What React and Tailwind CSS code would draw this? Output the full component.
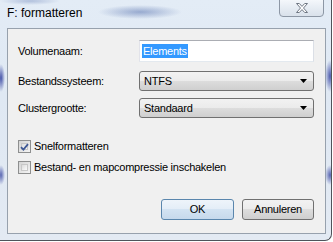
import React from 'react';

const font = "font-['Liberation_Sans',Arial,sans-serif]";

const CloseIcon = () => (
  <svg width="12" height="10" viewBox="0 0 12 10">
    <polygon
      points="0.5,0.5 3.3,0.5 6,3.4 8.7,0.5 11.5,0.5 7.5,5 11.5,9.5 8.7,9.5 6,6.6 3.3,9.5 0.5,9.5 4.5,5"
      fill="#ffffff"
      stroke="#6f7783"
      strokeWidth="1"
      strokeLinejoin="round"
    />
  </svg>
);

const Arrow = () => (
  <svg width="7" height="4" viewBox="0 0 7 4">
    <polygon points="0,0 7,0 3.5,4" fill="#000" />
  </svg>
);

const Combo = ({ value }) => (
  <div className="w-[175px] h-[20px] flex items-center justify-between pl-[4px] pr-[6px] border border-[#707070] rounded-[3px] bg-[linear-gradient(#f2f2f2,#ebebeb_50%,#dddddd_50%,#cfcfcf)]">
    <span className="text-[11px] tracking-[-0.25px] text-black leading-none">{value}</span>
    <Arrow />
  </div>
);

const Checkbox = ({ checked, label }) => (
  <label className="flex items-center gap-[3px] h-[13px]">
    <span className="w-[13px] h-[13px] border border-[#8e8f8f] bg-[linear-gradient(135deg,#d4d4d4,#f4f4f4)] p-[2px] flex">
      <span className="flex-1 bg-[linear-gradient(135deg,#dcdcdc,#fbfbfb)] border border-[#c8c8c8] flex items-center justify-center">
        {checked && (
          <svg width="9" height="8" viewBox="0 0 9 8" className="-m-[2px]">
            <path d="M1 4.2 L3.4 6.6 L8 1.2" fill="none" stroke="#3f5995" strokeWidth="1.8" />
          </svg>
        )}
      </span>
    </span>
    <span className="text-[11px] tracking-[-0.25px] text-black">{label}</span>
  </label>
);

const Row = ({ label, children, className }) => (
  <div className={`flex items-center ${className}`}>
    <span className="w-[121px] text-[11px] tracking-[-0.25px] text-black">{label}</span>
    {children}
  </div>
);

export default function App() {
  return (
    <div className={`w-[333px] h-[242px] bg-white overflow-hidden ${font}`}>
      <div className="w-[332px] h-[241px] flex flex-col pl-[7px] border-r border-b border-[#4f545b] rounded-br-[7px] bg-[radial-gradient(ellipse_42px_7px_at_140px_12px,rgba(60,90,160,0.45),transparent),radial-gradient(ellipse_30px_4px_at_30px_1px,rgba(60,90,160,0.3),transparent),radial-gradient(ellipse_4px_14px_at_1px_78px,rgba(30,45,150,0.8),transparent),radial-gradient(ellipse_4px_10px_at_1px_175px,rgba(30,45,150,0.7),transparent),radial-gradient(ellipse_5px_16px_at_330px_76px,rgba(30,45,150,0.75),transparent),radial-gradient(ellipse_5px_10px_at_330px_175px,rgba(30,45,150,0.7),transparent),linear-gradient(#e3ecf6,#dfe8f3_40%,#e3eaf3)]">
        <div className="h-[28px] flex items-start justify-between pr-[7px]">
          <span className="mt-[6px] text-[12px] leading-[15px] text-black">F: formatteren</span>
          <div className="w-[45px] h-[18px] -mt-[1px] flex items-center justify-center border border-[#8d97a5] rounded-b-[4px] bg-[linear-gradient(#f4f7fb,#e6ecf3_50%,#d9e1eb)]">
            <CloseIcon />
          </div>
        </div>
        <div className="w-[319px] h-[206px] border border-[#97a1ad] bg-[#f0f0f0] flex flex-col pl-[10px] pr-[11px] pt-[11px]">
          <Row label="Volumenaam:">
            <div className="w-[175px] h-[22px] border border-[#abadb3] border-l-[#e2e3ea] border-b-[#e3e9ef] border-r-[#dbdfe6] bg-white flex items-center pl-[2px]">
              <span className="bg-[#3399ff] text-white text-[11px] tracking-[-0.25px] leading-[14px] px-[1px]">Elements</span>
            </div>
          </Row>
          <Row label="Bestandssysteem:" className="mt-[9px]">
            <Combo value="NTFS" />
          </Row>
          <Row label="Clustergrootte:" className="mt-[7px]">
            <Combo value="Standaard" />
          </Row>
          <div className="mt-[22px] flex flex-col gap-[8px]">
            <Checkbox checked label="Snelformatteren" />
            <Checkbox label="Bestand- en mapcompressie inschakelen" />
          </div>
          <div className="mt-[25px] flex justify-end gap-[8px]">
            <button className="w-[73px] h-[21px] border border-[#5a86ad] rounded-[3px] bg-[linear-gradient(#eef4fa,#e3edf7_50%,#d3e3f2_50%,#c6d9ec)] text-[11px] tracking-[-0.25px] text-black">
              OK
            </button>
            <button className="w-[72px] h-[21px] border border-[#707070] rounded-[3px] bg-[linear-gradient(#f2f2f2,#ebebeb_50%,#dddddd_50%,#cfcfcf)] text-[11px] tracking-[-0.25px] text-black">
              Annuleren
            </button>
          </div>
        </div>
      </div>
    </div>
  );
}
